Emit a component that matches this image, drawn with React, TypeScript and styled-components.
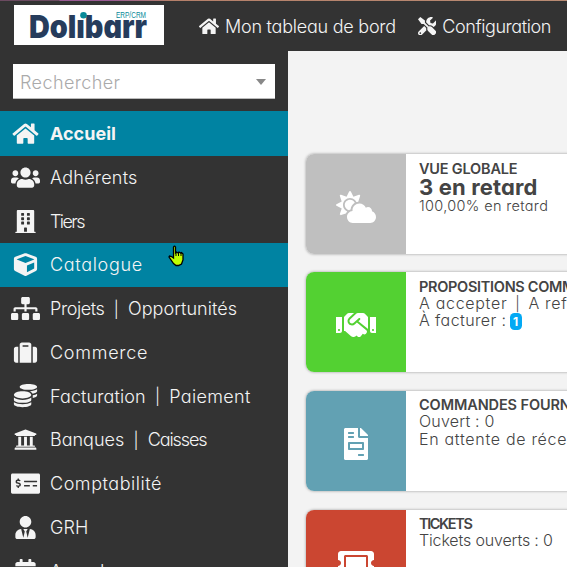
import React from "react";
import styled, { createGlobalStyle } from "styled-components";
import {
  FaHome, FaUsers, FaBuilding, FaCube, FaSitemap, FaSuitcase, FaCoins, FaUniversity,
  FaMoneyCheckAlt, FaUserTie, FaCalendarAlt, FaCloudSun, FaHandshake, FaFileInvoice,
  FaTicketAlt, FaTools,
} from "react-icons/fa";

const Global = createGlobalStyle`
  html, body { margin: 0; overflow: hidden; }
  body { font-family: "Inter", "Open Sans", sans-serif; font-weight: 300; font-feature-settings: "cv11"; background: #f3f3f3; }
`;
const Page = styled.div`width: 567px; height: 567px; overflow: hidden; display: flex; flex-direction: column;`;
const Header = styled.header`
  box-sizing: border-box; height: 51px; flex: none; background: #333; color: #f4f4f4;
  display: flex; align-items: flex-start; padding: 5px 0 0 14px; position: relative;
`;
const Strip = styled.div`
  position: absolute; inset: 0 0 auto 0; height: 1px;
  background: linear-gradient(90deg, #6b4a60 0 59px, #9a5a94 60px 110px, #b5806a 170px, #b98b73);
`;
const Logo = styled.div`
  width: 150px; height: 40px; flex: none; background: #fff; margin-right: 35px;
  svg { display: block; }
`;
const TopLink = styled.a<{ $icon: number; $ls: number }>`
  display: flex; align-items: center; height: 42px; font-size: 18px; white-space: nowrap;
  margin-right: 22px; letter-spacing: ${p => p.$ls}px;
  svg { width: ${p => p.$icon}px; height: 18.5px; margin-right: 6px; }
`;
const Body = styled.div`display: flex; flex: 1; min-height: 0;`;
const Side = styled.nav`width: 288px; flex: none; background: #333; color: #f4f4f4; overflow: hidden;`;
const Search = styled.div`
  box-sizing: border-box; margin: 13px 13px 12px; height: 35px; background: #fff; border-bottom: 1px solid #bbb;
  display: flex; align-items: center; justify-content: space-between; padding: 2px 9px 0 7px;
  font-size: 18px; color: #aaa; letter-spacing: 0.4px;
`;
const Caret = styled.i`border: 5px solid transparent; border-top: 6px solid #888; border-bottom: 0;`;
const Item = styled.a<{ $active?: boolean; $bold?: boolean }>`
  display: flex; align-items: center; height: ${p => (p.$bold ? 45 : 43.75)}px; padding-left: 11px;
  background: ${p => (p.$active ? "#0083a2" : "transparent")};
  font-size: 18px; font-weight: ${p => (p.$bold ? 700 : 300)}; white-space: pre;
  &:nth-of-type(3) { height: 43.2px; }
  svg { width: 29px; height: 23.2px; flex: none; margin-right: 10px; }
`;
const Word = styled.span<{ $ls: number }>`letter-spacing: ${p => p.$ls}px;`;
const Sep = styled.span<{ $w: number }>`width: ${p => p.$w}px; text-align: center; font-size: 0.9em;`;
const Main = styled.main`flex: 1; min-width: 0; padding: 103px 0 0 18px; overflow: hidden;`;
const Card = styled.section`
  display: flex; width: 330px; height: 100px; margin-bottom: 18.45px; border-radius: 8px; overflow: hidden;
  background: #fff; box-shadow: 0 0 3px rgba(0, 0, 0, 0.38); white-space: pre; color: #444;
  &:nth-of-type(3) { margin-bottom: 19px; }
`;
const Tile = styled.div<{ $c: string }>`
  width: 100px; flex: none; background: ${p => p.$c}; color: #fff; display: flex; align-items: center; justify-content: center;
  padding-top: 6px; box-sizing: border-box;
  svg { width: 40px; height: 32px; }
`;
const Info = styled.div`padding: 5.500px 0 0 13px;`;
const Title = styled.div<{ $ls: number }>`font-size: 14.5px; line-height: 17px; font-weight: 600; letter-spacing: ${p => p.$ls}px;`;
const Big = styled.div`font-size: 22px; line-height: 20px; font-weight: 700; letter-spacing: 0.15px;`;
const Line = styled.div<{ $size?: number; $ls: number }>`
  font-size: ${p => p.$size || 16}px; line-height: 17.5px; letter-spacing: ${p => p.$ls}px; display: flex; align-items: center;
`;
const Badge = styled.span`
  width: 12px; height: 17px; margin-left: 3px; border-radius: 4.5px; background: #03a9f4; color: #fff;
  font-size: 12px; font-weight: 700; text-align: center; line-height: 17px; letter-spacing: 0;
`;
const Cursor = styled.svg`position: absolute; left: 168px; top: 245px;`;

type Part = [string, number];
const menu: [React.ComponentType, Part, Part?][] = [
  [FaHome, ["Accueil", 0]],
  [FaUsers, ["Adhérents", 0.22]],
  [FaBuilding, ["Tiers", -1.6]],
  [FaCube, ["Catalogue", 0.67]],
  [FaSitemap, ["Projets", -0.4], ["Opportunités", 0.05]],
  [FaSuitcase, ["Commerce", 0.75]],
  [FaCoins, ["Facturation", 0.1], ["Paiement", 0.35]],
  [FaUniversity, ["Banques", 0], ["Caisses", -1.1]],
  [FaMoneyCheckAlt, ["Comptabilité", 0.55]],
  [FaUserTie, ["GRH", 0.1]],
  [FaCalendarAlt, ["Agenda", -0.1]],
];

export default function App() {
  return (
    <Page>
      <Global />
      <Header>
        <Strip />
        <Logo>
          <svg width="150" height="40" viewBox="0 0 150 40">
            <text x="15" y="33" fontSize="32" fontWeight="900" fill="#263c5c" textLength="118" lengthAdjust="spacingAndGlyphs">Dolıbarr</text>
            <circle cx="69.5" cy="10.3" r="3.3" fill="#078a99" />
            <text x="102" y="12.5" fontSize="9" fontFamily="Liberation Sans" fontWeight="400" fill="#078a99" textLength="30" lengthAdjust="spacingAndGlyphs">ERP/CRM</text>
          </svg>
        </Logo>
        <TopLink $icon={20} $ls={-0.24}><FaHome />Mon tableau de bord</TopLink>
        <TopLink $icon={18.5} $ls={-0.43}><FaTools />Configuration</TopLink>
      </Header>
      <Body>
        <Side>
          <Search>Rechercher<Caret /></Search>
          {menu.map(([Icon, first, second], i) => (
            <Item key={first[0]} $active={i === 0 || i === 3} $bold={i === 0}>
              <Icon />
              <Word $ls={first[1]}>{first[0]}</Word>
              {second && <><Sep $w={23.5}>|</Sep><Word $ls={second[1]}>{second[0]}</Word></>}
            </Item>
          ))}
        </Side>
        <Main>
          <Card>
            <Tile $c="#bfbfbf"><FaCloudSun /></Tile>
            <Info><Title $ls={-0.2}>VUE GLOBALE</Title><Big>3 en retard</Big><Line $size={14.5} $ls={0.33}>100,00% en retard</Line></Info>
          </Card>
          <Card>
            <Tile $c="#53d132"><FaHandshake /></Tile>
            <Info>
              <Title $ls={-0.3}>PROPOSITIONS COMMERCIALES</Title>
              <Line $ls={0.7}>A accepter<Sep $w={21}>|</Sep>A refuser : 0</Line>
              <Line $ls={0.4}>À facturer :<Badge>1</Badge></Line>
            </Info>
          </Card>
          <Card>
            <Tile $c="#62a1b3"><FaFileInvoice /></Tile>
            <Info><Title $ls={-0.1}>COMMANDES FOURNISSEURS</Title><Line $ls={0.2}>Ouvert : 0</Line><Line $ls={0.7}>En attente de réception : 0</Line></Info>
          </Card>
          <Card>
            <Tile $c="#cb4631"><FaTicketAlt /></Tile>
            <Info><Title $ls={-1.4}>TICKETS</Title><Line $ls={-0.15}>Tickets ouverts : 0</Line></Info>
          </Card>
        </Main>
      </Body>
      <Cursor width="17" height="22" viewBox="0 0 17 22">
        <path d="M5.5 2q1-1.600 2 0v6l1-1 1.500 1 1-1 1.500 1 1-.5 1.500 1.500v6l-1.500 4-3 1.500H8l-2.500-2L1 12l.5-1 2 .5 2 1.500Z" fill="#bfff00" stroke="#000" strokeWidth="1.300" />
        <path d="M8 8v3m2.500-3v3m2.500-3v3" stroke="#000" />
      </Cursor>
    </Page>
  );
}
